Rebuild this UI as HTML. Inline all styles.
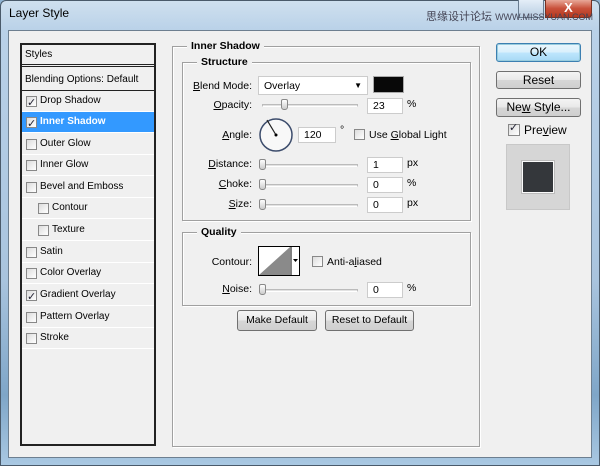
<!DOCTYPE html>
<html><head><meta charset="utf-8"><style>
*{box-sizing:border-box;margin:0;padding:0}
body{width:600px;height:466px;overflow:hidden;background:#8fb3d3;font-family:"Liberation Sans","DejaVu Sans",sans-serif;font-size:10.5px;color:#000;position:relative}
.a{position:absolute}
.frame{left:0;top:0;width:600px;height:466px;background:linear-gradient(180deg,#cfe0ef 0,#b9d1e8 30px,#a9c4de 60%,#7fa6c8 85%,#a9c8e2 100%);border:1px solid #4a5a6a;border-radius:6px 6px 0 0}
.client{left:8px;top:30px;width:584px;height:428px;background:#f0f0f0;border:1px solid #6d7f90}
.list{left:20px;top:43px;width:136px;height:403px;border:2px solid #222;background:#f0f0f0;font-size:10px}
.row{position:absolute;left:0;width:132px;height:21px;border-bottom:1px solid #fff;padding-left:18px;line-height:20px}
.row.sel{background:#3399ff;color:#fff;font-weight:bold}
.cb{position:absolute;left:4px;top:5px;width:11px;height:11px;border:1px solid #888;background:linear-gradient(135deg,#ddd,#fff)}
.sub .cb{left:16px}.sub{padding-left:30px}
.ck:after{content:"✓";position:absolute;left:0px;top:-4px;font-size:11px;color:#223;font-weight:bold}
.fs{border:1px solid #a0a0a0;box-shadow:1px 1px 0 #fff inset,1px 1px 0 #fff}
.lg{position:absolute;background:#f0f0f0;font-weight:bold;padding:0 4px;font-size:10.5px}
.lbl{position:absolute;text-align:right;width:80px}
.inp{position:absolute;background:#fff;border:1px solid #ccc;height:16px;padding-left:5px;line-height:15px}
.sl{position:absolute;height:3px;border:1px solid #bbb;border-bottom-color:#fff;background:#e2e2e2}
.th{position:absolute;width:7px;height:11px;border:1px solid #888;border-radius:2px 2px 3px 3px;background:linear-gradient(#fff,#ccc)}
.btn{position:absolute;border:1px solid #707070;border-radius:3px;background:linear-gradient(#f4f4f4 0,#e8e8e8 50%,#d6d6d6 51%,#cfcfcf);text-align:center}
u{text-decoration:underline}
</style></head><body>
<div class="a frame"></div>
<div class="a" style="left:9px;top:6px;font-size:12px;color:#000">Layer Style</div>
<div class="a" style="left:518px;top:0;width:26px;height:18px;border:1px solid #6a7d90;border-top:none;background:linear-gradient(#e4eef8,#b8cde2)"></div>
<div class="a" style="left:545px;top:0;width:47px;height:18px;border:1px solid #7a3020;border-top:none;border-radius:0 0 4px 0;background:linear-gradient(#e8a898,#c8503a 50%,#b8381e);color:#fff;font-weight:bold;text-align:center;font-size:13px;line-height:16px">X</div>
<div class="a" style="left:426px;top:8px;font-size:11px;color:#445;font-family:'Liberation Sans','Noto Sans CJK SC',sans-serif;white-space:nowrap">思缘设计论坛 <span style="font-size:9px">WWW.MISSYUAN.COM</span></div>
<div class="a client"></div>

<div class="a list">
 <div class="row" style="top:0;height:22px;padding-left:3px;border-bottom:3px double #222">Styles</div>
 <div class="row" style="top:25px;padding-left:3px;border-bottom:1px solid #222">Blending Options: Default</div>
 <div class="row" style="top:46px"><span class="cb ck"></span>Drop Shadow</div>
 <div class="row sel" style="top:67px"><span class="cb ck"></span>Inner Shadow</div>
 <div class="row" style="top:89px"><span class="cb"></span>Outer Glow</div>
 <div class="row" style="top:110px"><span class="cb"></span>Inner Glow</div>
 <div class="row" style="top:132px"><span class="cb"></span>Bevel and Emboss</div>
 <div class="row sub" style="top:153px"><span class="cb"></span>Contour</div>
 <div class="row sub" style="top:175px"><span class="cb"></span>Texture</div>
 <div class="row" style="top:197px"><span class="cb"></span>Satin</div>
 <div class="row" style="top:218px"><span class="cb"></span>Color Overlay</div>
 <div class="row" style="top:240px"><span class="cb ck"></span>Gradient Overlay</div>
 <div class="row" style="top:262px"><span class="cb"></span>Pattern Overlay</div>
 <div class="row" style="top:283px"><span class="cb"></span>Stroke</div>
</div>

<div class="a fs" style="left:172px;top:46px;width:308px;height:401px"></div>
<div class="lg" style="left:187px;top:40px">Inner Shadow</div>
<div class="a fs" style="left:182px;top:62px;width:289px;height:159px"></div>
<div class="lg" style="left:197px;top:56px">Structure</div>

<div class="lbl" style="left:172px;top:80px"><u>B</u>lend Mode:</div>
<div class="inp" style="left:258px;top:76px;width:110px;height:19px;line-height:18px">Overlay<span style="position:absolute;right:5px;top:0;font-size:8px">▼</span></div>
<div class="a" style="left:373px;top:76px;width:31px;height:17px;background:#080808;border:1px solid #aaa"></div>

<div class="lbl" style="left:172px;top:99px"><u>O</u>pacity:</div>
<div class="sl" style="left:262px;top:104px;width:96px"></div><div class="th" style="left:281px;top:99px"></div>
<div class="inp" style="left:367px;top:98px;width:36px">23</div><div class="a" style="left:407px;top:98px">%</div>

<div class="lbl" style="left:172px;top:129px"><u>A</u>ngle:</div>
<svg class="a" style="left:258px;top:117px" width="36" height="36"><circle cx="18" cy="18" r="16" fill="#f8f8f8" stroke="#3c4c6c" stroke-width="1.5"/><line x1="18" y1="18" x2="9" y2="3" stroke="#222" stroke-width="1.2"/><circle cx="18" cy="18" r="1.5" fill="#000"/></svg>
<div class="inp" style="left:298px;top:127px;width:38px">120</div><div class="a" style="left:340px;top:124px">°</div>
<div class="cb a" style="left:354px;top:129px"></div><div class="a" style="left:369px;top:129px">Use <u>G</u>lobal Light</div>

<div class="lbl" style="left:172px;top:158px"><u>D</u>istance:</div>
<div class="sl" style="left:262px;top:164px;width:96px"></div><div class="th" style="left:259px;top:159px"></div>
<div class="inp" style="left:367px;top:157px;width:36px">1</div><div class="a" style="left:407px;top:157px">px</div>
<div class="lbl" style="left:172px;top:178px"><u>C</u>hoke:</div>
<div class="sl" style="left:262px;top:184px;width:96px"></div><div class="th" style="left:259px;top:179px"></div>
<div class="inp" style="left:367px;top:177px;width:36px">0</div><div class="a" style="left:407px;top:177px">%</div>
<div class="lbl" style="left:172px;top:198px"><u>S</u>ize:</div>
<div class="sl" style="left:262px;top:204px;width:96px"></div><div class="th" style="left:259px;top:199px"></div>
<div class="inp" style="left:367px;top:197px;width:36px">0</div><div class="a" style="left:407px;top:197px">px</div>

<div class="a fs" style="left:182px;top:232px;width:289px;height:74px"></div>
<div class="lg" style="left:197px;top:226px">Quality</div>
<div class="lbl" style="left:172px;top:256px">Contour:</div>
<svg class="a" style="left:258px;top:246px" width="42" height="30"><rect x="0.5" y="0.5" width="41" height="29" fill="#fff" stroke="#000"/><polygon points="1,29 32,1 32,29" fill="#8a8a8a"/><line x1="33" y1="0" x2="33" y2="30" stroke="#000"/><polygon points="35,13 40,13 37.5,16" fill="#000"/></svg>
<div class="cb a" style="left:312px;top:256px"></div><div class="a" style="left:327px;top:256px">Anti-a<u>l</u>iased</div>
<div class="lbl" style="left:172px;top:283px"><u>N</u>oise:</div>
<div class="sl" style="left:262px;top:289px;width:96px"></div><div class="th" style="left:259px;top:284px"></div>
<div class="inp" style="left:367px;top:282px;width:36px">0</div><div class="a" style="left:407px;top:282px">%</div>

<div class="btn" style="left:237px;top:310px;width:80px;height:21px;line-height:19px">Make Default</div>
<div class="btn" style="left:325px;top:310px;width:89px;height:21px;line-height:19px">Reset to Default</div>

<div class="btn" style="left:496px;top:43px;width:85px;height:19px;line-height:17px;font-size:12px;border-color:#3c7fb1;box-shadow:0 0 0 1px #9cd inset;background:linear-gradient(#eaf6fd,#d9f0fc 50%,#bee6fd 51%,#a7d9f5)">OK</div>
<div class="btn" style="left:496px;top:71px;width:85px;height:18px;line-height:16px;font-size:12px">Reset</div>
<div class="btn" style="left:496px;top:98px;width:85px;height:19px;line-height:17px;font-size:12px">Ne<u>w</u> Style...</div>
<div class="cb ck a" style="left:508px;top:124px;width:12px;height:12px"></div><div class="a" style="left:524px;top:123px;font-size:12px">Pre<u>v</u>iew</div>
<div class="a" style="left:506px;top:144px;width:64px;height:66px;background:#d6d6d6;border:1px solid #c8c8c8"></div>
<div class="a" style="left:522px;top:161px;width:32px;height:32px;background:#34373b;border:1px solid #fafafa;outline:1px solid #bbb"></div>
</body></html>
